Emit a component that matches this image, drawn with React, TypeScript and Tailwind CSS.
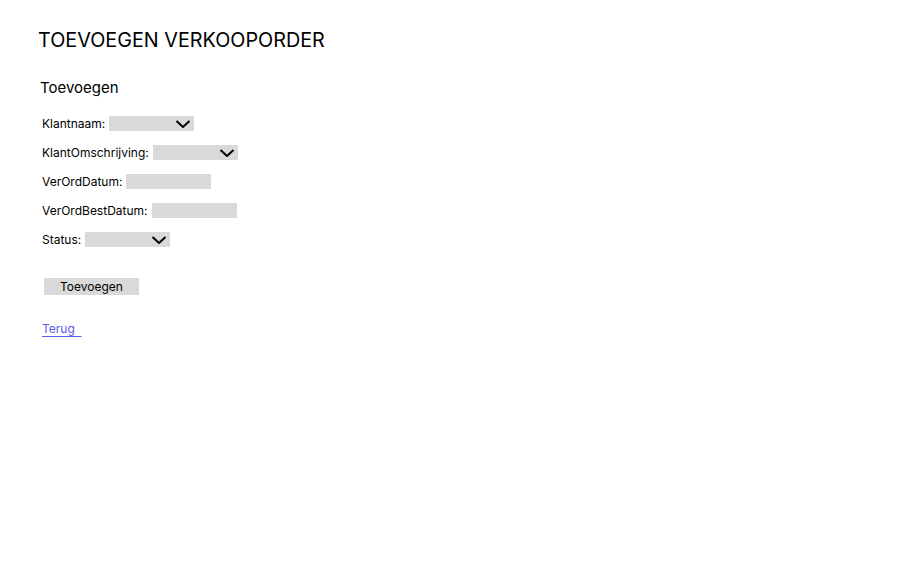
import React from "react";

const font = { fontFamily: "Inter, 'Liberation Sans', sans-serif" };

const Chevron = () => (
  <svg width="16" height="8" viewBox="0 0 16 8" className="shrink-0">
    <polyline points="1.5,1 8,7 14.5,1" fill="none" stroke="#000" strokeWidth="2" />
  </svg>
);

type RowProps = { label: string; select?: boolean };

const Row: React.FC<RowProps> = ({ label, select }) => (
  <div className="flex items-center h-[15px]">
    <span className="text-[12px] leading-[15px] text-black mr-1">{label}</span>
    <div className="w-[85px] h-[15px] bg-[#d9d9d9] flex items-center justify-end pr-[3px]">
      {select && <Chevron />}
    </div>
  </div>
);

export default function App() {
  return (
    <div className="w-[915px] h-[561px] bg-white text-black" style={font}>
      <div className="pt-[28px] pl-[38px]">
        <h1 className="text-[19.8px] leading-[24px] font-normal">TOEVOEGEN VERKOOPORDER</h1>

        <h2 className="mt-[27px] ml-[2px] text-[15px] leading-[18px] font-normal">Toevoegen</h2>

        <div className="mt-[19px] ml-[4px] flex flex-col gap-[14px]">
          <Row label="Klantnaam:" select />
          <Row label="KlantOmschrijving:" select />
          <Row label="VerOrdDatum:" />
          <Row label="VerOrdBestDatum:" />
          <Row label="Status:" select />
        </div>

        <button className="mt-[31px] ml-[6px] w-[95px] h-[17px] bg-[#d9d9d9] text-[12px] leading-[17px] text-black block">
          Toevoegen
        </button>

        <a href="#" className="mt-[26px] ml-[4px] inline-block text-[12px] leading-[15px] text-[#5a5af0] underline underline-offset-[3px]">
          Terug&nbsp;&nbsp;
        </a>
      </div>
    </div>
  );
}
